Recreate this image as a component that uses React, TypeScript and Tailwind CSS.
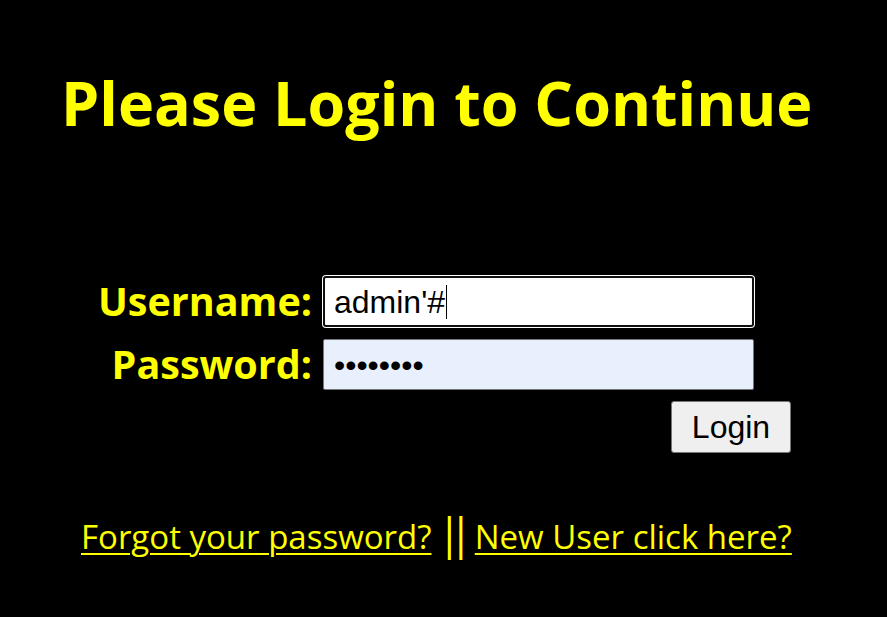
import React from "react";

export default function App() {
  return (
    <div className="min-h-[617px] w-full bg-black text-[#ffff00]" style={{ fontFamily: "'Open Sans', 'Noto Sans', sans-serif" }}>
      <h1 className="pl-[61px] pt-[72px] text-[61px] font-bold leading-none whitespace-nowrap">
        Please Login to Continue
      </h1>

      <div className="mt-[143px] flex flex-col pl-[96px]">
        <div className="flex items-center">
          <div className="flex w-[216px] justify-end text-[39.5px] font-bold leading-none whitespace-nowrap">Username:</div>
          <div className="ml-[11px] flex h-[51px] w-[431px] items-center rounded-[3px] border-2 border-[#101010] bg-white pl-[9px] text-[32px] text-black shadow-[0_0_0_1px_#ffffff]" style={{ fontFamily: "'Liberation Sans', Arial, sans-serif" }}>
            <span>admin'#</span>
            <span className="ml-[1px] inline-block h-[34px] w-[1px] bg-black" />
          </div>
        </div>
        <div className="mt-[12px] flex items-center">
          <div className="flex w-[216px] justify-end text-[39.5px] font-bold leading-none whitespace-nowrap">Password:</div>
          <div className="ml-[11px] flex h-[51px] w-[431px] items-center rounded-[2px] border border-[#767676] bg-[#e8f0fe] pl-[10px] text-[32px] text-black" style={{ fontFamily: "'Liberation Sans', Arial, sans-serif" }}>
            ••••••••
          </div>
        </div>
        <div className="mt-[11px] flex w-[695px] justify-end">
          <button className="flex h-[52px] w-[120px] items-center justify-center rounded-[3px] border border-[#767676] bg-[#efefef] text-[32px] leading-none text-black" style={{ fontFamily: "'Liberation Sans', Arial, sans-serif" }}>
            Login
          </button>
        </div>
      </div>

      <div className="mt-[58px] flex items-baseline pl-[81px] text-[33px] leading-none whitespace-nowrap">
        <a href="#" className="text-[#ffff00] underline decoration-2 underline-offset-[4px]">Forgot your password?</a>
        <span className="ml-[6px] text-[43px] tracking-[-12px]">||</span>
        <a href="#" className="ml-[14px] text-[#ffff00] underline decoration-2 underline-offset-[4px]">New User click here?</a>
      </div>
    </div>
  );
}
